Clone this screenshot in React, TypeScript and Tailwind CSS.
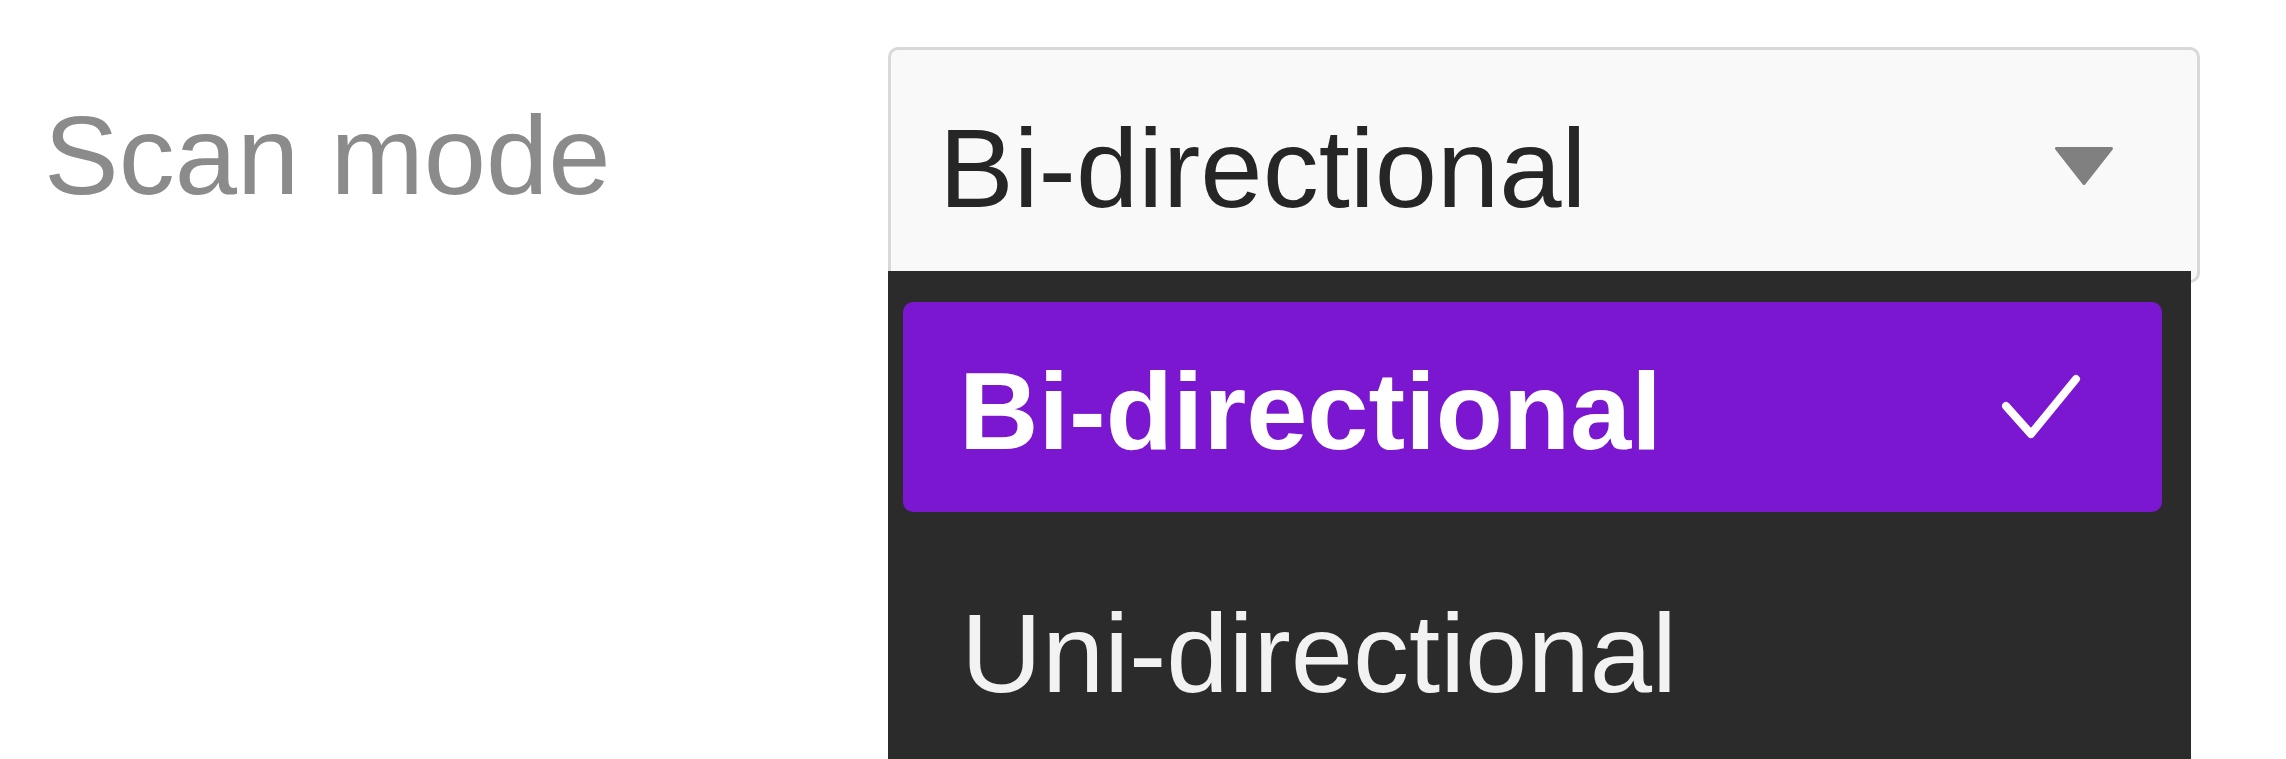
import { useState } from "react"

const options = ["Bi-directional", "Uni-directional"]

export default function App() {
  const [value] = useState("Bi-directional")

  return (
    <div className="h-screen w-full overflow-hidden bg-white font-['Liberation_Sans',Arial,sans-serif]">
      <div className="flex items-start pl-[44px] pt-[47px]">
        {/* Label */}
        <div className="mt-[53px] w-[844px] shrink-0 text-[112px] leading-none text-[#8b8b8b]">Scan mode</div>

        {/* Select */}
        <div className="relative w-[1312px] shrink-0">
          <button className="flex h-[236px] w-full items-center justify-between rounded-[10px] border-[3px] border-[#d8d8d8] bg-[#f9f9f9] pl-[48px] pr-[84px] pt-[8px] text-left">
            <span className="text-[112px] leading-none text-[#262626]">{value}</span>
            <svg width="58" height="38" viewBox="0 0 58 38" className="-mt-[7px]">
              <polygon points="1.5,1.5 56.5,1.5 29,36.5" fill="#808080" stroke="#808080" strokeWidth="3" strokeLinejoin="round" />
            </svg>
          </button>

          {/* Menu */}
          <div className="absolute left-0 top-[224px] w-[1303px] bg-[#2b2b2b] pb-[40px] pl-[15px] pr-[29px] pt-[31px]">
            <div className="flex flex-col gap-[33px]">
              {options.map((opt) => {
                const selected = opt === value
                return (
                  <div
                    key={opt}
                    className={
                      selected
                        ? "flex h-[210px] items-center justify-between rounded-[10px] bg-[#7b17d0] pl-[56px] pr-[80px] pt-[8px]"
                        : "flex h-[210px] items-center justify-between rounded-[10px] pl-[58px] pr-[80px] pt-[8px]"
                    }
                  >
                    <span
                      className={
                        selected
                          ? "text-[110px] font-bold leading-none text-white"
                          : "text-[112px] leading-none text-[#f2f2f2]"
                      }
                    >
                      {opt}
                    </span>
                    {selected && (
                      <svg width="82" height="66" viewBox="0 0 82 66" className="-mt-[10px]">
                        <polyline
                          points="6,33 31,61 76,6"
                          fill="none"
                          stroke="white"
                          strokeWidth="8"
                          strokeLinecap="round"
                          strokeLinejoin="round"
                        />
                      </svg>
                    )}
                  </div>
                )
              })}
            </div>
          </div>
        </div>
      </div>
    </div>
  )
}
